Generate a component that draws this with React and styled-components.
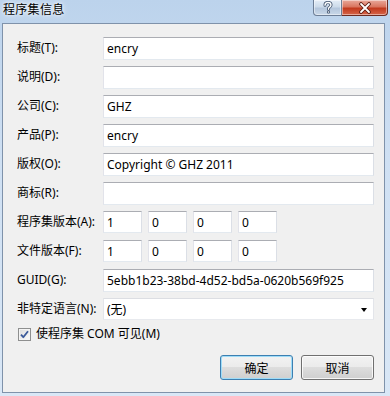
import React from "react"
import styled, { createGlobalStyle } from "styled-components"

const GlobalStyle = createGlobalStyle`
  html, body {
    margin: 0;
    padding: 0;
    background: #fff;
  }
  * {
    box-sizing: border-box;
  }
`

const UI_FONT = `"Noto Sans", "Noto Sans CJK SC", sans-serif`

const fields = [
  { label: "标题(T):", value: "encry" },
  { label: "说明(D):", value: "" },
  { label: "公司(C):", value: "GHZ" },
  { label: "产品(P):", value: "encry" },
  { label: "版权(O):", value: "Copyright © GHZ 2011" },
  { label: "商标(R):", value: "" },
]

const versions = [
  { label: "程序集版本(A):", parts: ["1", "0", "0", "0"] },
  { label: "文件版本(F):", parts: ["1", "0", "0", "0"] },
]

const HelpIcon = () => (
  <svg width="12" height="13" viewBox="0 0 12 13">
    <path
      d="M3 4.2C3 2.3 4.4 1.5 6 1.5s3 .9 3 2.5c0 1.6-1.6 2-2.2 2.8-.3.4-.3.9-.3 1.4"
      fill="none"
      stroke="#3d4f6a"
      strokeWidth="3"
      strokeLinecap="round"
    />
    <path
      d="M3 4.2C3 2.3 4.4 1.5 6 1.5s3 .9 3 2.5c0 1.6-1.6 2-2.2 2.8-.3.4-.3.9-.3 1.4"
      fill="none"
      stroke="#fff"
      strokeWidth="1.4"
      strokeLinecap="round"
    />
    <circle cx="6.5" cy="11" r="1.6" fill="#3d4f6a" />
    <circle cx="6.5" cy="11" r="0.8" fill="#fff" />
  </svg>
)

const CloseIcon = () => (
  <svg width="14" height="12" viewBox="0 0 14 12">
    <path
      d="M3 2l8 8M11 2l-8 8"
      stroke="#5a1a10"
      strokeWidth="3.6"
      strokeLinecap="round"
    />
    <path
      d="M3 2l8 8M11 2l-8 8"
      stroke="#fff"
      strokeWidth="1.8"
      strokeLinecap="round"
    />
  </svg>
)

const CheckIcon = () => (
  <svg width="9" height="9" viewBox="0 0 9 9">
    <path
      d="M1 4.6l2.3 2.6L8 1.2"
      fill="none"
      stroke="#3b5a9a"
      strokeWidth="1.8"
      strokeLinejoin="round"
    />
  </svg>
)

const App = () => {
  return (
    <Window>
      <GlobalStyle />
      <TitleBar>
        <Title>程序集信息</Title>
        <CaptionButtons>
          <CaptionButton>
            <HelpIcon />
          </CaptionButton>
          <CaptionButton close>
            <CloseIcon />
          </CaptionButton>
        </CaptionButtons>
      </TitleBar>
      <Client>
        <Form>
          {fields.map(f => (
            <React.Fragment key={f.label}>
              <Label>{f.label}</Label>
              <TextBox>{f.value}</TextBox>
            </React.Fragment>
          ))}
          {versions.map(v => (
            <React.Fragment key={v.label}>
              <Label>{v.label}</Label>
              <VersionRow>
                {v.parts.map((p, i) => (
                  <TextBox key={i} small>
                    {p}
                  </TextBox>
                ))}
              </VersionRow>
            </React.Fragment>
          ))}
          <Label>GUID(G):</Label>
          <TextBox>5ebb1b23-38bd-4d52-bd5a-0620b569f925</TextBox>
          <Label>非特定语言(N):</Label>
          <Combo>
            <span>(无)</span>
            <Arrow />
          </Combo>
        </Form>
        <CheckRow>
          <CheckBox>
            <CheckIcon />
          </CheckBox>
          <span>使程序集 COM 可见(M)</span>
        </CheckRow>
        <ButtonRow>
          <Button primary>确定</Button>
          <Button>取消</Button>
        </ButtonRow>
      </Client>
    </Window>
  )
}

const Window = styled.div`
  width: 390px;
  height: 396px;
  display: flex;
  flex-direction: column;
  padding: 0 5px 3px 2px;
  background: linear-gradient(180deg, #bcd3ec 0%, #cfe0f3 40%, #d9e7f6 100%);
  font-family: ${UI_FONT};
  font-size: 12px;
  color: #000;
`

const TitleBar = styled.div`
  height: 23px;
  flex: none;
  display: flex;
  justify-content: space-between;
  align-items: flex-start;
  padding-left: 1px;
`

const Title = styled.div`
  margin-top: 3px;
  font-size: 12px;
  line-height: 14px;
  color: #000;
  text-shadow: 0 0 6px #fff, 0 0 3px #fff;
  letter-spacing: 0.3px;
`

const CaptionButtons = styled.div`
  display: flex;
  margin-right: -3px;
`

const CaptionButton = styled.div`
  width: ${p => (p.close ? "46px" : "29px")};
  height: 16px;
  display: flex;
  align-items: center;
  justify-content: center;
  border: 1px solid ${p => (p.close ? "#6c2a20" : "#6d7e96")};
  border-top: none;
  border-left-width: ${p => (p.close ? "0" : "1px")};
  border-radius: ${p => (p.close ? "0 0 4px 0" : "0 0 0 4px")};
  background: ${p =>
    p.close
      ? "linear-gradient(180deg, #e9a99b 0%, #d9755f 45%, #c2391d 55%, #d6664a 100%)"
      : "linear-gradient(180deg, #e4edf7 0%, #cddbea 45%, #b4c6dc 55%, #c9d8e9 100%)"};
  box-shadow: inset 0 0 0 1px rgba(255, 255, 255, 0.45);
`

const Client = styled.div`
  flex: 1;
  display: flex;
  flex-direction: column;
  background: #f0f0f0;
  border: 1px solid #7f92aa;
  padding: 13px 10px 0 14px;
`

const Form = styled.div`
  display: grid;
  grid-template-columns: 86px 271px;
  grid-auto-rows: 22px;
  row-gap: 7px;
  align-items: center;
`

const Label = styled.div`
  white-space: nowrap;
  line-height: 16px;
`

const TextBox = styled.div`
  height: ${p => (p.small ? "22px" : "23px")};
  width: ${p => (p.small ? "39px" : "100%")};
  align-self: start;
  display: flex;
  align-items: center;
  padding: 0 3px;
  background: #fff;
  border: 1px solid;
  border-color: #abadb3 #dbdfe6 #e3e9ef #e2e3ea;
  white-space: nowrap;
  overflow: hidden;
`

const VersionRow = styled.div`
  display: flex;
  gap: 6px;
  align-self: start;
`

const Combo = styled.div`
  height: 22px;
  align-self: start;
  display: flex;
  align-items: center;
  justify-content: space-between;
  padding: 0 6px 0 3px;
  background: #fff;
  border: 1px solid;
  border-color: #dcdee3 #e3e5ea #e8eaee #e3e5ea;
`

const Arrow = styled.span`
  width: 0;
  height: 0;
  margin-top: 2px;
  border-left: 3.5px solid transparent;
  border-right: 3.5px solid transparent;
  border-top: 4px solid #000;
`

const CheckRow = styled.div`
  display: flex;
  align-items: center;
  gap: 5px;
  margin-top: 7px;
  margin-left: 1px;
  height: 14px;
  line-height: 14px;
`

const CheckBox = styled.span`
  width: 13px;
  height: 13px;
  display: flex;
  align-items: center;
  justify-content: center;
  border: 1px solid #8e8f8f;
  background: linear-gradient(135deg, #dcdcdc 0%, #fbfbfb 100%);
  box-shadow: inset 0 0 0 1px #f4f4f4;
`

const ButtonRow = styled.div`
  display: flex;
  justify-content: flex-end;
  gap: 8px;
  margin-top: 14px;
`

const Button = styled.div`
  width: 73px;
  height: 25px;
  display: flex;
  align-items: center;
  justify-content: center;
  border: 1px solid ${p => (p.primary ? "#3c7fb1" : "#707070")};
  border-radius: 3px;
  background: linear-gradient(
    180deg,
    #f2f2f2 0%,
    #ebebeb 49%,
    #dddddd 50%,
    #cfcfcf 100%
  );
  box-shadow: inset 0 0 0 1px
    ${p => (p.primary ? "#9edcf8" : "rgba(255, 255, 255, 0.8)")};
`

export default App
